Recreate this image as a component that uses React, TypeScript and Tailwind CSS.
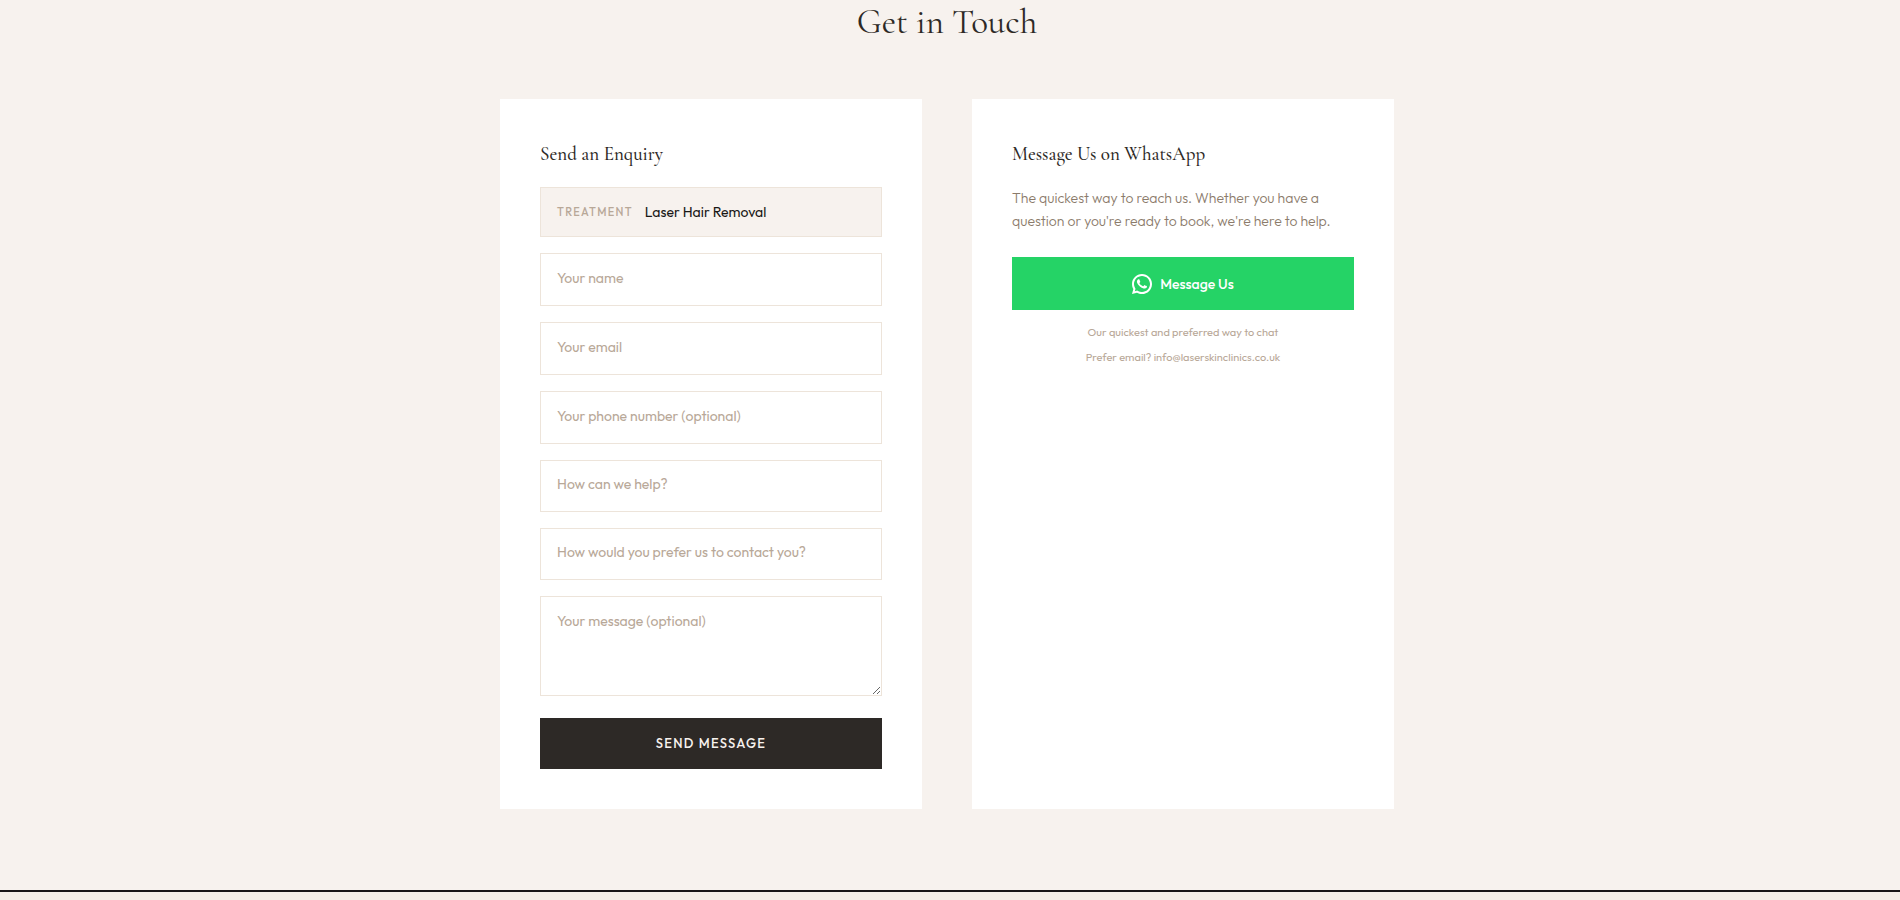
import { useState, type FormEvent, type ReactNode } from 'react';
import { RiWhatsappLine } from 'react-icons/ri';

// ── Types ──────────────────────────────────────────────────────────
interface TextField {
  id: string;
  type: string;
  placeholder: string;
}

interface SelectField {
  id: string;
  placeholder: string;
  options: string[];
}

// ── Field definitions ──────────────────────────────────────────────
const textFields: TextField[] = [
  { id: 'name', type: 'text', placeholder: 'Your name' },
  { id: 'email', type: 'email', placeholder: 'Your email' },
  { id: 'phone', type: 'tel', placeholder: 'Your phone number (optional)' },
];

const selectFields: SelectField[] = [
  { id: 'topic', placeholder: 'How can we help?', options: ['Book a treatment', 'Ask a question', 'Something else'] },
  { id: 'contact', placeholder: 'How would you prefer us to contact you?', options: ['WhatsApp', 'Email', 'Phone'] },
];

const fieldClass =
  'block w-full border border-[#ede4da] bg-white px-4 text-sm text-[#2d2926] outline-none rounded-none placeholder:text-[#b8a898] placeholder:opacity-100 focus:border-[#b8a898]';

// ── Enquiry form ───────────────────────────────────────────────────
function EnquiryForm() {
  const [values, setValues] = useState<Record<string, string>>({});

  const update = (id: string, value: string) => setValues((prev) => ({ ...prev, [id]: value }));

  const handleSubmit = (e: FormEvent) => {
    e.preventDefault();
  };

  return (
    <form onSubmit={handleSubmit} className="flex flex-col gap-4">
      <div className="flex h-[50px] items-center gap-3 border border-[#ede4da] bg-[#f7f2ee] px-4">
        <span className="text-[11px] font-medium uppercase tracking-[0.12em] text-[#b8a898]">Treatment</span>
        <span className="text-sm text-[#1a1816]">Laser Hair Removal</span>
      </div>

      {textFields.map((field) => (
        <input
          key={field.id}
          id={field.id}
          type={field.type}
          aria-label={field.placeholder}
          placeholder={field.placeholder}
          value={values[field.id] ?? ''}
          onChange={(e) => update(field.id, e.target.value)}
          className={`${fieldClass} h-[53px] pb-1`}
        />
      ))}

      {selectFields.map((field) => (
        <select
          key={field.id}
          id={field.id}
          aria-label={field.placeholder}
          value={values[field.id] ?? ''}
          onChange={(e) => update(field.id, e.target.value)}
          className={`${fieldClass} h-[52px] appearance-none pb-1 ${values[field.id] ? '' : 'text-[#b8a898]'}`}
        >
          <option value="">{field.placeholder}</option>
          {field.options.map((option) => (
            <option key={option}>{option}</option>
          ))}
        </select>
      ))}

      <textarea
        id="message"
        aria-label="Your message (optional)"
        placeholder="Your message (optional)"
        value={values.message ?? ''}
        onChange={(e) => update('message', e.target.value)}
        className={`${fieldClass} h-[100px] resize-y py-3.5`}
      />

      <button
        type="submit"
        className="mt-1.5 h-[51px] w-full bg-[#2d2926] text-[13px] font-medium uppercase tracking-widest text-[#f7f2ee]"
      >
        Send Message
      </button>
    </form>
  );
}

// ── WhatsApp card ──────────────────────────────────────────────────
function WhatsAppCard() {
  return (
    <div className="bg-white p-10">
      <CardTitle>Message Us on WhatsApp</CardTitle>
      <p className="mb-6 text-sm font-light leading-[23px] text-[#8b7b6b]">
        The quickest way to reach us. Whether you have a question or you're ready to book, we're here to help.
      </p>
      <a
        href="#whatsapp"
        className="mb-2.5 flex h-[53px] items-center justify-center gap-2 bg-[#25d366] text-sm font-medium text-white"
      >
        <RiWhatsappLine viewBox="2 2 20 20" className="size-5" aria-hidden="true" />
        Message Us
      </a>
      <p className="text-center text-[11px] leading-[25px] text-[#b8a898]">
        Our quickest and preferred way to chat
      </p>
      <p className="text-center text-[11px] leading-[25px] text-[#b8a898]">
        Prefer email? <a href="mailto:info@laserskinclinics.co.uk">info@laserskinclinics.co.uk</a>
      </p>
    </div>
  );
}

function CardTitle({ children }: { children: ReactNode }) {
  return (
    <h3 className="mb-[18px] font-['Cormorant_Garamond','Liberation_Serif',serif] text-[19px] font-medium leading-[30px] text-[#2d2926]">
      {children}
    </h3>
  );
}

// ── Page ───────────────────────────────────────────────────────────
export default function App() {
  return (
    <div className="flex min-h-screen flex-col bg-[#f5f0e6] font-['Outfit','Lato',sans-serif]">
      <section className="border-b-2 border-[#1a1816] bg-[#f7f2ee] pb-[81px] pl-6 pr-[30px]">
        <h2 className="pb-[55px] text-center font-['Cormorant_Garamond','Liberation_Serif',serif] text-[35px] leading-[44px] text-[#2d2926]">
          Get in Touch
        </h2>
        <div className="mx-auto grid max-w-[894px] grid-cols-1 gap-[50px] md:grid-cols-2">
          <div className="bg-white p-10">
            <CardTitle>Send an Enquiry</CardTitle>
            <EnquiryForm />
          </div>
          <WhatsAppCard />
        </div>
      </section>
    </div>
  );
}
